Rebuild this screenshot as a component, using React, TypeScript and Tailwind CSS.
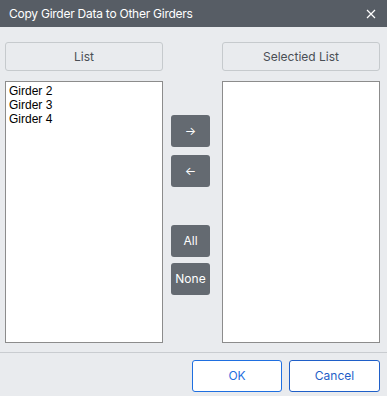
import React from "react";

export default function App() {
  const font = { fontFamily: "Inter, 'Liberation Sans', sans-serif" };
  return (
    <div className="w-[387px] h-[396px] bg-[#e9ebee] flex flex-col overflow-hidden" style={font}>
      <div className="h-[27px] shrink-0 bg-[#575d65] flex items-center justify-between pl-[9px] pr-[10px] text-white text-[12px] tracking-[-0.25px]">
        <span>Copy Girder Data to Other Girders</span>
        <svg width="10" height="10" viewBox="0 0 10 10" className="mr-[1px]">
          <path d="M1 1 L9 9 M9 1 L1 9" stroke="white" strokeWidth="1.2" />
        </svg>
      </div>
      <div className="flex pl-[5px] pr-[7px] pt-[15px]">
        <div className="w-[158px] flex flex-col">
          <div className="h-[29px] border border-[#c6cacd] rounded-[3px] flex items-center justify-center text-[12px] text-[#4a4f55]">List</div>
          <div className="mt-[10px] h-[262px] bg-white border border-[#8c8c8c] px-[3px] pt-[2px] text-[12px] leading-[14px] text-black" style={{ fontFamily: "'Liberation Sans', Arial, sans-serif" }}>
            <div>Girder 2</div>
            <div>Girder 3</div>
            <div>Girder 4</div>
          </div>
        </div>
        <div className="w-[59px] flex flex-col pl-[8px] pt-[73px]">
          <button className="w-[39px] h-[32px] bg-[#646a71] rounded-[3px] text-white text-[12px] flex items-center justify-center">→</button>
          <button className="mt-[8px] w-[39px] h-[32px] bg-[#646a71] rounded-[3px] text-white text-[12px] flex items-center justify-center">←</button>
          <button className="mt-[38px] w-[39px] h-[32px] bg-[#646a71] rounded-[3px] text-white text-[12px] flex items-center justify-center">All</button>
          <button className="mt-[6px] w-[39px] h-[32px] bg-[#646a71] rounded-[3px] text-white text-[12px] flex items-center justify-center">None</button>
        </div>
        <div className="w-[158px] flex flex-col">
          <div className="h-[29px] border border-[#c6cacd] rounded-[3px] flex items-center justify-center text-[12px] text-[#4a4f55]">Selectied List</div>
          <div className="mt-[10px] h-[262px] bg-white border border-[#8c8c8c]" />
        </div>
      </div>
      <div className="mt-[9px] border-t border-[#c9ccd0] flex justify-end gap-[7px] pr-[7px] pt-[7px]">
        <button className="w-[90px] h-[32px] bg-white border border-[#1f6fe0] rounded-[3px] text-[12px] text-[#1f6fe0]">OK</button>
        <button className="w-[91px] h-[32px] bg-white border border-[#1f5fc8] rounded-[3px] text-[12px] text-[#1f5fc8]">Cancel</button>
      </div>
    </div>
  );
}
